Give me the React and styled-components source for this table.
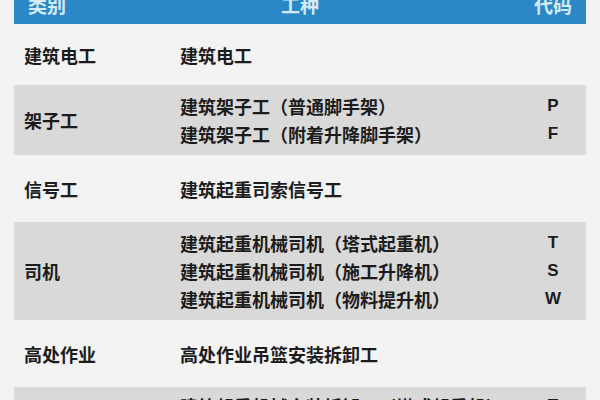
import React from "react";
import styled, { createGlobalStyle } from "styled-components";

const Global = createGlobalStyle`
  html, body {
    margin: 0;
    padding: 0;
    background: #f2f2f2;
    overflow: hidden;
    height: 400px;
  }
  body {
    font-family: "Noto Sans CJK SC", "Noto Sans", sans-serif;
  }
`;

const Page = styled.div`
  width: 600px;
  height: 400px;
  background: #f2f2f2;
  padding: 0 14px;
  box-sizing: border-box;
  overflow: hidden;
`;

const Table = styled.div`
  margin-top: -10px;
  display: flex;
  flex-direction: column;
`;

const Header = styled.div`
  height: 34px;
  background: #2a87c8;
  display: grid;
  grid-template-columns: 1fr 1fr 1fr;
  align-items: start;
  padding: 6px 14px 0 14px;
  box-sizing: border-box;
  color: #d6ebf7;
  font-size: 19px;
  line-height: 18px;
  font-weight: 700;
`;

const HeadCell = styled.div`
  text-align: ${(p) => p.$align || "left"};
`;

const Row = styled.div`
  display: grid;
  grid-template-columns: 156px 1fr 46px;
  align-items: center;
  min-height: ${(p) => p.$min || 67}px;
  padding: ${(p) => p.$top || 7}px 10px 7px;
  box-sizing: border-box;
  background: ${(p) => (p.$shade ? "#d9d9d9" : "#f3f3f3")};
  color: #1c1c1c;
  font-size: 18px;
  font-weight: 700;
  line-height: 28px;
`;

const Cat = styled.div`
  white-space: nowrap;
`;

const Lines = styled.div`
  display: flex;
  flex-direction: column;
  white-space: nowrap;
`;

const Codes = styled.div`
  display: flex;
  flex-direction: column;
  align-items: center;
  font-family: "Liberation Sans", "Noto Sans", sans-serif;
  font-size: 17px;
`;

const rows = [
  { cat: "建筑电工", items: [["建筑电工", ""]], min: 61 },
  {
    cat: "架子工",
    items: [
      ["建筑架子工（普通脚手架）", "P"],
      ["建筑架子工（附着升降脚手架）", "F"],
    ],
    shade: true,
  },
  { cat: "信号工", items: [["建筑起重司索信号工", ""]] },
  {
    cat: "司机",
    items: [
      ["建筑起重机械司机（塔式起重机）", "T"],
      ["建筑起重机械司机（施工升降机）", "S"],
      ["建筑起重机械司机（物料提升机）", "W"],
    ],
    shade: true,
  },
  { cat: "高处作业", items: [["高处作业吊篮安装拆卸工", ""]] },
  {
    cat: "安装拆卸工",
    items: [
      ["建筑起重机械安装拆卸工（塔式起重机）", "T"],
      ["建筑起重机械安装拆卸工（施工升降机）", "S"],
      ["建筑起重机械安装拆卸工（物料提升机）", "W"],
    ],
    shade: true,
    top: 5,
  },
];

export default function App() {
  return (
    <>
      <Global />
      <Page>
        <Table>
          <Header>
            <HeadCell>类别</HeadCell>
            <HeadCell $align="center">工种</HeadCell>
            <HeadCell $align="right">代码</HeadCell>
          </Header>
          {rows.map((r) => (
            <Row key={r.cat} $shade={r.shade} $min={r.min} $top={r.top}>
              <Cat>{r.cat}</Cat>
              <Lines>
                {r.items.map(([t]) => (
                  <span key={t}>{t}</span>
                ))}
              </Lines>
              <Codes>
                {r.items.map(([t, c]) => (
                  <span key={t}>{c || "\u00a0"}</span>
                ))}
              </Codes>
            </Row>
          ))}
        </Table>
      </Page>
    </>
  );
}
